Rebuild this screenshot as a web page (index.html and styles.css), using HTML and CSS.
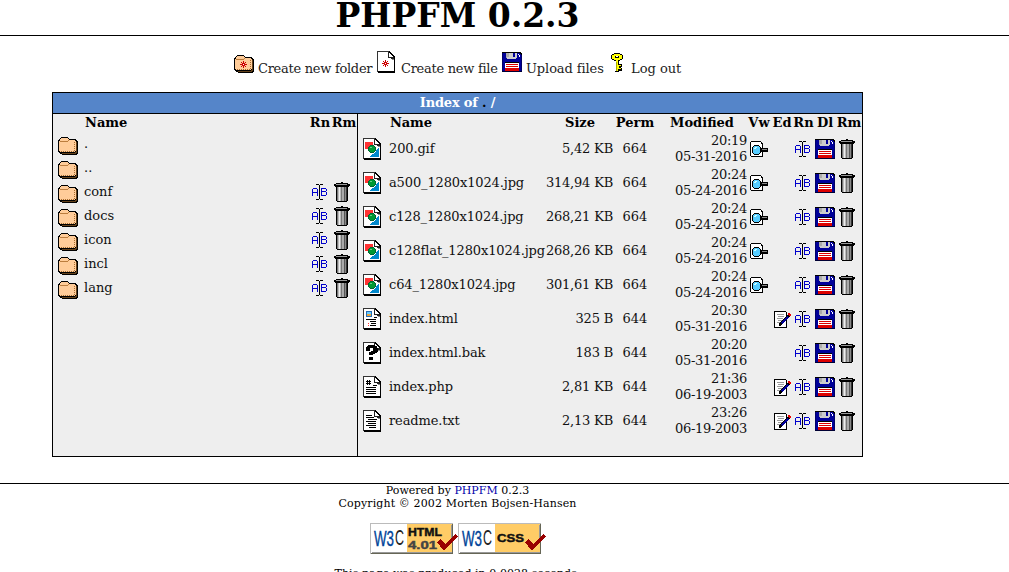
FILE: index.html
```html
<!DOCTYPE html>
<html lang="en">
<head>
<meta charset="utf-8">
<title>PHPFM 0.2.3</title>
<link rel="stylesheet" href="styles.css">
</head>
<body>
<svg class="sprites" width="0" height="0">
  <symbol id="folder" viewBox="0 0 20 18">
    <path d="M2 1h1V0h7v1h1v1h7v1h1v1h1v13h-1v1H4v-1H2v-1H1v-1H0V3h1V2h1z" fill="#000"/>
    <path d="M18 5h1v11h-1v1H4v-1h13v-1h1z" fill="#634119"/>
    <path d="M3 1h7v1h1v1h6v1h1v10h-1v1H2v-1H1V4h1V2h1z" fill="#ffcc99"/>
    <path d="M2 4h8V3h1v1h-1v1H2z" fill="#bb7d3e"/>
    <path d="M3 14.5h14M16.500 5v10" stroke="#a76b2d" stroke-dasharray="1 1" fill="none"/>
  </symbol>
  <symbol id="star" viewBox="0 0 7 7">
    <path d="M3 0h1v2h1V1h1v1H5v1h2v1H5v1h1v1H5V5H4v2H3V5H2v1H1V5h1V4H0V3h2V2H1V1h1v1h1z" fill="#c00"/>
    <path d="M3 3h1v1H3z" fill="#fff"/>
  </symbol>
  <symbol id="page" viewBox="0 0 18 22">
    <path d="M0 0h12l6 6v16H1v-1H0z" fill="#000"/>
    <path d="M1 1h10v6h6v13H1z" fill="#fff"/>
    <path d="M0 0h12v1H1v20H0z" fill="#333"/>
    <path d="M12 2h1v1h1v1h1v1h1v1h-4z" fill="#fff"/>
    <path d="M11 1h1v5h5v2h-3V7h-3z" fill="#222"/>
    <path d="M15 8h2v1h-2z" fill="#888"/>
  </symbol>
  <symbol id="image" viewBox="0 0 18 22">
    <use href="#page" width="18" height="22"/>
    <path d="M2 4h8v7H2z" fill="#f33"/>
    <path d="M16 10v9H7v-1h1v-1h1v-1h2v-1h1v-1h1v-2h1v-1h1v-1z" fill="#08c"/>
    <path d="M7 7h4v1h1v1h1v4h-1v1h-1v1H7v-1H6v-1H5V9h1V8h1z" fill="#063"/>
    <path d="M7 8h4v1h1v4h-1v1H7v-1H6V9h1z" fill="#093"/>
    <path d="M7 9h2v1H7z" fill="#6c8"/>
  </symbol>
  <symbol id="html" viewBox="0 0 18 22">
    <use href="#page" width="18" height="22"/>
    <path d="M3 3h6v6H3z" fill="#286eb4"/><path d="M4 4h4v2H4z" fill="#6cf"/><path d="M4 6h4v2H4z" fill="#e8a33c"/>
    <path d="M11 9h3v1h-3zM3 11h10v1H3zM7 13h6v1H7zM8 15h5v1H8zM7 17h6v1H7z" fill="#000"/>
    <path d="M5 15h1v1H5zM5 17h1v1H5z" fill="#f33"/>
  </symbol>
  <symbol id="unknown" viewBox="0 0 18 22">
    <use href="#page" width="18" height="22"/>
    <path d="M5 3h7v1h2v2h1v4h-1v1h-2v1h-2v1H6v-3h2V9h2V6H7v3H3V5h1V4h1zM6 15h4v3H6z" fill="#000"/>
  </symbol>
  <symbol id="php" viewBox="0 0 18 22">
    <use href="#page" width="18" height="22"/>
    <path d="M4 4h1v5H4zM6 4h1v5H6zM3 5h5v1H3zM3 7h5v1H3zM3 11h10v1H3zM3 13h10v1H3zM3 15h10v1H3zM3 17h10v1H3zM10 9h4v1h-4z" fill="#000"/>
  </symbol>
  <symbol id="text" viewBox="0 0 18 22">
    <use href="#page" width="18" height="22"/>
    <path d="M3 5h6v1H3zM3 7h8v1H3zM5 9h9v1H5zM3 11h10v1H3zM5 13h8v1H5zM3 15h10v1H3zM6 17h7v1H6z" fill="#000"/>
  </symbol>
  <symbol id="disk" viewBox="0 0 20 20">
    <path d="M0 0h19v1h1v19H0z" fill="#006"/>
    <path d="M1 1h17v1h1v17H1z" fill="#009"/>
    <path d="M0 0h19v1h1v2h-1V2h-1V1H0z" fill="#000"/>
    <path d="M4 1h11v5h-1v1H5V6H4z" fill="#ccc"/>
    <path d="M11 1h2v4h-2z" fill="#009"/>
    <path d="M4 1h3v4H5v1H4z" fill="#aaa"/>
    <path d="M17 3h1v2h-1zM16 2h1v1h-1z" fill="#fff"/>
    <path d="M3 11h14v8H3z" fill="#fff"/>
    <path d="M3 10h14v1H3z" fill="#000"/>
    <path d="M4 12h12v1H4zM4 14h12v1H4zM3 16h14v3H3z" fill="#d00"/>
    <path d="M0 19h20v1H0z" fill="#003"/>
  </symbol>
  <symbol id="key" viewBox="0 0 12 19">
    <path d="M3 0h6v1h2v1h1v4h-1v1H9v1H8v3h3v3h-1v1h1v3H8v1H4v-1h1V8H3V7H1V6H0V2h1V1h2z" fill="#000"/>
    <path d="M3 1h6v1h2v4H9v1H7v5h3v1H8v2h2v1H7v2H5V7H3V6H1V2h2z" fill="#ff0"/>
    <path d="M4 3h4v2H4z" fill="#000"/><path d="M5 3h2v1H5z" fill="#fff"/>
    <path d="M5 9h1v9H5z" fill="#aa0"/>
  </symbol>
  <symbol id="rename" viewBox="0 0 16 16">
    <path d="M1 4h4v1h1v7H5V9H1v3H0V5h1zM1 5v3h4V5zM9 4h5v1h1v2h-1v1h1v3h-1v1H9zM10 5v2h4V5zM10 8v3h4V8z" fill="#00c" fill-rule="evenodd"/>
    <path d="M4 0h3v1H4zM7 1h1v14H7zM8 0h3v1H8zM4 15h3v1H4zM8 15h3v1H8z" fill="#000"/>
  </symbol>
  <symbol id="trash" viewBox="0 0 16 20">
    <path d="M7 0h2v1h5v1h2v2h-1v1h-1v14h-1v1H3v-1H2V5H1V4H0V2h2V1h5z" fill="#000"/>
    <path d="M2 2h11v1H2z" fill="#999"/>
    <path d="M3 5h1v14H3zM7 5h1v14H7z" fill="#777"/>
    <path d="M4 5h3v14H4z" fill="#bbb"/><path d="M5 5h1v14H5z" fill="#eee"/>
    <path d="M8 5h2v14H8z" fill="#aaa"/><path d="M10 5h1v14h-1z" fill="#555"/><path d="M11 5h1v14h-1z" fill="#888"/>
    <path d="M12 5h1v14h-1z" fill="#333"/>
  </symbol>
  <symbol id="view" viewBox="0 0 18 16">
    <path d="M1 0h10v1h1v1h1v14H1v-1H0V1h1z" fill="#000"/>
    <path d="M1 1h10v2h1v12H1z" fill="#fff"/>
    <path d="M4 4h5v1h1v1h1v1h7v4h-7v1h-1v1H9v1H4v-1H3v-1H2V6h1V5h1z" fill="#000"/>
    <path d="M12 8h5v1h-5z" fill="#888"/>
    <path d="M4 5h5v1h1v6H9v1H4v-1H3V6h1z" fill="#5cf"/>
    <path d="M5 6h2v1H6v1H4V7h1z" fill="#cff"/>
  </symbol>
  <symbol id="edit" viewBox="0 0 17 17">
    <path d="M0 0h12v1h1v16H0z" fill="#000"/><path d="M1 1h11v15H1z" fill="#fff"/>
    <path d="M3 3h7v1H3zM4 5h6v1H4zM3 7h6v1H3zM4 9h4v1H4zM3 11h3v1H3z" fill="#999"/>
    <path d="M14 2h2v1h1v2h-1v1h-1v1h-1v1h-1v1h-1v1h-1v1h-1v1H9v1H8v1H7v1H5v-3h1v-1h1v-1h1V9h1V8h1V7h1V6h1V5h1V4h1z" fill="#000"/>
    <path d="M13 5h1v1h1v1h-1v1h-1v1h-1v1h-1v1h-1v1H9v1H8v-1H7v-1h1v-1h1V9h1V8h1V7h1V6h1z" fill="#009"/>
    <path d="M14 2h2v1h1v2h-2V4h-1z" fill="#e00"/>
  </symbol>
  <symbol id="badge" viewBox="0 0 88 31">
    <path d="M0 0h83v31H0z" fill="#bbb"/><path d="M1 1h81v29H1z" fill="#fff"/>
    <path d="M37 1h45v28H37z" fill="#fc6"/><path d="M82 1h1v30H1v-1h81z" fill="#665"/>
    <path d="M81 2h1v27H2v1h80z" fill="#999"/>
  </symbol>
  <symbol id="check" viewBox="0 0 22 18">
    <path d="M1 9l4-3 4 5L19 1l3 2L9 17H7z" fill="#900"/>
  </symbol>
</svg>

<header class="title"><h1>PHPFM 0.2.3</h1></header>

<main>
  <nav class="actions">
    <a class="folder-new"><span class="pic"><svg width="20" height="18"><use href="#folder"/><use href="#star" x="6" y="6" width="7" height="7"/></svg></span><span>Create new folder</span></a>
    <a class="file-new"><span class="pic"><svg width="18" height="22"><use href="#page"/><use href="#star" x="5" y="9" width="7" height="7"/></svg></span><span>Create new file</span></a>
    <a class="upload"><span class="pic"><svg width="20" height="20"><use href="#disk"/></svg></span><span>Upload files</span></a>
    <a class="logout"><span class="pic"><svg width="12" height="19"><use href="#key"/></svg></span><span>Log out</span></a>
  </nav>

  <section class="index">
    <h2>Index of <b>.</b> /</h2>
    <div class="panes">
      <div class="dirs">
        <div class="row head"><i></i><span>Name</span><span class="act">Rn</span><span class="act">Rm</span></div>
        <div class="row"><svg width="20" height="18"><use href="#folder"/></svg><span class="dot">.</span></div>
        <div class="row"><svg width="20" height="18"><use href="#folder"/></svg><span class="dot">..</span></div>
        <div class="row"><svg width="20" height="18"><use href="#folder"/></svg><span>conf</span><svg class="act" width="16" height="16"><use href="#rename"/></svg><svg class="act" width="16" height="20"><use href="#trash"/></svg></div>
        <div class="row"><svg width="20" height="18"><use href="#folder"/></svg><span>docs</span><svg class="act" width="16" height="16"><use href="#rename"/></svg><svg class="act" width="16" height="20"><use href="#trash"/></svg></div>
        <div class="row"><svg width="20" height="18"><use href="#folder"/></svg><span>icon</span><svg class="act" width="16" height="16"><use href="#rename"/></svg><svg class="act" width="16" height="20"><use href="#trash"/></svg></div>
        <div class="row"><svg width="20" height="18"><use href="#folder"/></svg><span>incl</span><svg class="act" width="16" height="16"><use href="#rename"/></svg><svg class="act" width="16" height="20"><use href="#trash"/></svg></div>
        <div class="row"><svg width="20" height="18"><use href="#folder"/></svg><span>lang</span><svg class="act" width="16" height="16"><use href="#rename"/></svg><svg class="act" width="16" height="20"><use href="#trash"/></svg></div>
      </div>
      <div class="files">
        <div class="row head"><i></i><span class="name">Name</span><span class="c size">Size</span><span class="c">Perm</span><span class="c">Modified</span><span class="c">Vw</span><span class="c">Ed</span><span class="c">Rn</span><span class="c">Dl</span><span class="c">Rm</span></div>
        <div class="row"><svg width="18" height="22"><use href="#image"/></svg><span>200.gif</span><span class="r">5,42 KB</span><span class="c">664</span><span class="date">20:19<br>05-31-2016</span><svg width="18" height="16"><use href="#view"/></svg><i></i><svg width="16" height="16"><use href="#rename"/></svg><svg width="20" height="20"><use href="#disk"/></svg><svg width="16" height="20"><use href="#trash"/></svg></div>
        <div class="row"><svg width="18" height="22"><use href="#image"/></svg><span>a500_1280x1024.jpg</span><span class="r">314,94 KB</span><span class="c">664</span><span class="date">20:24<br>05-24-2016</span><svg width="18" height="16"><use href="#view"/></svg><i></i><svg width="16" height="16"><use href="#rename"/></svg><svg width="20" height="20"><use href="#disk"/></svg><svg width="16" height="20"><use href="#trash"/></svg></div>
        <div class="row"><svg width="18" height="22"><use href="#image"/></svg><span>c128_1280x1024.jpg</span><span class="r">268,21 KB</span><span class="c">664</span><span class="date">20:24<br>05-24-2016</span><svg width="18" height="16"><use href="#view"/></svg><i></i><svg width="16" height="16"><use href="#rename"/></svg><svg width="20" height="20"><use href="#disk"/></svg><svg width="16" height="20"><use href="#trash"/></svg></div>
        <div class="row"><svg width="18" height="22"><use href="#image"/></svg><span>c128flat_1280x1024.jpg</span><span class="r">268,26 KB</span><span class="c">664</span><span class="date">20:24<br>05-24-2016</span><svg width="18" height="16"><use href="#view"/></svg><i></i><svg width="16" height="16"><use href="#rename"/></svg><svg width="20" height="20"><use href="#disk"/></svg><svg width="16" height="20"><use href="#trash"/></svg></div>
        <div class="row"><svg width="18" height="22"><use href="#image"/></svg><span>c64_1280x1024.jpg</span><span class="r">301,61 KB</span><span class="c">664</span><span class="date">20:24<br>05-24-2016</span><svg width="18" height="16"><use href="#view"/></svg><i></i><svg width="16" height="16"><use href="#rename"/></svg><svg width="20" height="20"><use href="#disk"/></svg><svg width="16" height="20"><use href="#trash"/></svg></div>
        <div class="row"><svg width="18" height="22"><use href="#html"/></svg><span>index.html</span><span class="r">325 B</span><span class="c">644</span><span class="date">20:30<br>05-31-2016</span><i></i><svg width="17" height="17"><use href="#edit"/></svg><svg width="16" height="16"><use href="#rename"/></svg><svg width="20" height="20"><use href="#disk"/></svg><svg width="16" height="20"><use href="#trash"/></svg></div>
        <div class="row"><svg width="18" height="22"><use href="#unknown"/></svg><span>index.html.bak</span><span class="r">183 B</span><span class="c">644</span><span class="date">20:20<br>05-31-2016</span><i></i><i></i><svg width="16" height="16"><use href="#rename"/></svg><svg width="20" height="20"><use href="#disk"/></svg><svg width="16" height="20"><use href="#trash"/></svg></div>
        <div class="row"><svg width="18" height="22"><use href="#php"/></svg><span>index.php</span><span class="r">2,81 KB</span><span class="c">644</span><span class="date">21:36<br>06-19-2003</span><i></i><svg width="17" height="17"><use href="#edit"/></svg><svg width="16" height="16"><use href="#rename"/></svg><svg width="20" height="20"><use href="#disk"/></svg><svg width="16" height="20"><use href="#trash"/></svg></div>
        <div class="row"><svg width="18" height="22"><use href="#text"/></svg><span>readme.txt</span><span class="r">2,13 KB</span><span class="c">644</span><span class="date">23:26<br>06-19-2003</span><i></i><svg width="17" height="17"><use href="#edit"/></svg><svg width="16" height="16"><use href="#rename"/></svg><svg width="20" height="20"><use href="#disk"/></svg><svg width="16" height="20"><use href="#trash"/></svg></div>
      </div>
    </div>
  </section>
</main>

<footer>
  <div class="foot">
    <p>Powered by <a>PHPFM</a> 0.2.3</p>
    <p class="copyright">Copyright © 2002 Morten Bojsen-Hansen</p>
    <div class="badges">
      <svg width="88" height="31"><use href="#badge"/><text x="4" y="23" class="w3" textLength="20" lengthAdjust="spacingAndGlyphs">W3</text><text x="25" y="22" class="w3 cc" textLength="9" lengthAdjust="spacingAndGlyphs">C</text><text x="38" y="13" class="bt" textLength="34" lengthAdjust="spacingAndGlyphs">HTML</text><text x="38" y="26" class="bt ver" textLength="29" lengthAdjust="spacingAndGlyphs">4.01</text><use href="#check" x="66" y="10" width="22" height="18"/></svg>
      <svg width="88" height="31"><use href="#badge"/><text x="4" y="23" class="w3" textLength="20" lengthAdjust="spacingAndGlyphs">W3</text><text x="25" y="22" class="w3 cc" textLength="9" lengthAdjust="spacingAndGlyphs">C</text><text x="39" y="19" class="bt" textLength="27" lengthAdjust="spacingAndGlyphs">CSS</text><use href="#check" x="66" y="10" width="22" height="18"/></svg>
    </div>
    <p class="timing">This page was produced in 0.0028 seconds.</p>
  </div>
</footer>
</body>
</html>
```
FILE: styles.css
```css
* { box-sizing: border-box; }
html, body { height: 572px; overflow: hidden; }
body { margin: 0; background: #fff; color: #000; font: 13px/16px "DejaVu Serif", serif; }
h1, h2, p { margin: 0; }
svg { display: block; flex: none; shape-rendering: crispEdges; }
.sprites { width: 0; height: 0; float: left; }

.title { height: 36px; border-bottom: 1px solid #000; }
.title h1 { width: 915px; text-align: center; font-size: 33px; line-height: 32px; white-space: nowrap; }

main { width: 915px; padding: 0 52px; }
.actions { display: flex; height: 56px; padding: 14px 0 0 182px; white-space: nowrap; color: #222; }
.actions a { display: flex; height: 25px; }
.actions a > span:last-child { padding-top: 11px; }
.pic { display: flex; align-items: flex-end; padding-bottom: 2px; }
.folder-new { width: 143px; letter-spacing: -.28px; }
.folder-new .pic { width: 24px; }
.file-new { width: 125px; letter-spacing: -.28px; }
.file-new .pic { width: 24px; }
.upload { width: 109px; letter-spacing: -.1px; }
.upload .pic { width: 24px; padding-bottom: 3px; }
.logout .pic { width: 20px; padding-bottom: 3px; }

.index { width: 811px; height: 365px; border: 1px solid #000; background: #eee; }
.index h2 { height: 21px; border-bottom: 1px solid #000; background: #5585c9; color: #fff; text-align: center; font-size: 13px; line-height: 19px; letter-spacing: -.2px; }
.index h2 b { color: #000; }
.panes { display: grid; grid-template-columns: 305px 504px; height: 342px; }
.row { display: grid; align-items: center; white-space: nowrap; color: #111; }
.head { font-weight: bold; color: #000; }
.c { justify-self: center; }
.r { justify-self: end; letter-spacing: -.2px; }

.dirs { border-right: 1px solid #000; }
.dirs .row { grid-template-columns: 26px 230px 22px 26px; height: 24px; }
.dirs .row > svg:first-child { margin-left: 5px; }
.dirs .row > span { padding: 0 0 4px 5px; }
.dirs .row > .act { justify-self: center; align-self: start; padding: 0; margin-top: 2px; }
.dirs .row > svg.act:last-child { justify-self: start; margin: 0 0 0 3px; }
.dirs .head { height: 20px; }
.dirs .head > span:nth-child(2) { padding: 0 0 2px 6px; }
.dirs .head > .act { margin-top: 1px; }

.files .row { grid-template-columns: 31px 157px 67px 44px 90px 24px 22px 21px 22px 26px; height: 34px; }
.files .row > span:nth-child(2) { letter-spacing: -.13px; }
.files .row > svg { justify-self: center; }
.files .row > svg:nth-child(8) { justify-self: start; margin-left: 2px; }
.files .row > svg:first-child { justify-self: start; margin-left: 5px; }
.files .row > svg:last-child { justify-self: start; margin-left: 3px; }
.files .head { height: 18px; }
.name, .size { padding-left: 1px; }
.date { text-align: right; letter-spacing: -.3px; }

footer { margin-top: 26px; border-top: 1px solid #000; font-size: 11px; line-height: 13px; }
.foot { width: 915px; text-align: center; }
.foot a { color: #00a; }
.copyright { letter-spacing: .13px; }
.badges { display: flex; justify-content: center; padding-top: 13px; }
.timing { padding-top: 13px; letter-spacing: .06px; }
.w3 { font: 22px "Liberation Sans", sans-serif; fill: #049; stroke: #049; stroke-width: .4; }
.cc { fill: #222; stroke: none; }
.bt { font: bold 10px "Liberation Sans", sans-serif; fill: #111; stroke: #111; stroke-width: .4; }
.ver { fill: #444; stroke: #444; }
```
